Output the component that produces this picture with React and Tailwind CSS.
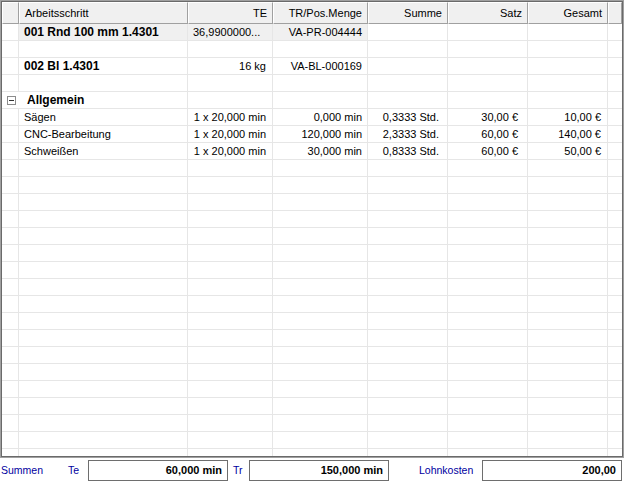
import React from 'react';

const cols = [
    { key: 'ind', w: 'w-[17px]' },
    { key: 'name', w: 'w-[169px]', label: 'Arbeitsschritt', align: 'text-left pl-[5px]' },
    { key: 'te', w: 'w-[85px]', label: 'TE', align: 'text-right pr-[5px]' },
    { key: 'tr', w: 'w-[95px]', label: 'TR/Pos.Menge', align: 'text-right pr-[5px]' },
    { key: 'summe', w: 'w-[80px]', label: 'Summe', align: 'text-right pr-[5px]' },
    { key: 'satz', w: 'w-[80px]', label: 'Satz', align: 'text-right pr-[5px]' },
    { key: 'gesamt', w: 'w-[80px]', label: 'Gesamt', align: 'text-right pr-[5px]' },
    { key: 'rest', w: 'flex-1' },
];

// rows of the Arbeitsplan grid
const rows = [
    { type: 'material', name: '001 Rnd 100 mm 1.4301', te: '36,9900000...', teLeft: true, tr: 'VA-PR-004444', shaded: true },
    { type: 'empty' },
    { type: 'material', name: '002 Bl 1.4301', te: '16 kg', tr: 'VA-BL-000169' },
    { type: 'empty' },
    { type: 'group', name: 'Allgemein' },
    { type: 'step', name: 'Sägen', te: '1 x 20,000 min', tr: '0,000 min', summe: '0,3333 Std.', satz: '30,00 €', gesamt: '10,00 €' },
    { type: 'step', name: 'CNC-Bearbeitung', te: '1 x 20,000 min', tr: '120,000 min', summe: '2,3333 Std.', satz: '60,00 €', gesamt: '140,00 €' },
    { type: 'step', name: 'Schweißen', te: '1 x 20,000 min', tr: '30,000 min', summe: '0,8333 Std.', satz: '60,00 €', gesamt: '50,00 €' },
];

const emptyRows = Array.from({ length: 19 }, (_, i) => i);

const Cell = ({ w, className = '', children }) => (
    <div className={`${w} shrink-0 h-full border-r border-[#e6e6e6] flex items-center overflow-hidden whitespace-nowrap ${className}`}>
        {children}
    </div>
);

const Row = ({ row }) => {
    const shade = row.shaded ? 'bg-[#f0f0f0]' : '';
    if (row.type === 'group') {
        return (
            <div className="flex h-[17px] border-b border-[#e6e6e6]">
                <div className="w-[17px] shrink-0 h-full flex items-center pl-[5px]">
                    <div className="w-[9px] h-[9px] border border-[#8c8c8c] bg-white flex items-center justify-center">
                        <div className="w-[5px] h-px bg-[#333]" />
                    </div>
                </div>
                <Cell w="w-[169px]" className="pl-[8px] font-bold text-[12px]">{row.name}</Cell>
                <Cell w="w-[85px]" />
                <Cell w="w-[95px]" />
                <Cell w="w-[80px]" />
                <Cell w="w-[80px]" />
                <Cell w="w-[80px]" />
                <div className="flex-1" />
            </div>
        );
    }
    const bold = row.type === 'material' ? 'font-bold text-[12px]' : '';
    return (
        <div className="flex h-[17px] border-b border-[#e6e6e6]">
            <Cell w="w-[17px]" />
            <Cell w="w-[169px]" className={`pl-[5px] ${bold} ${shade}`}>{row.name}</Cell>
            <Cell w="w-[85px]" className={`${row.teLeft ? 'justify-start pl-[5px]' : 'justify-end pr-[6px]'} ${shade}`}>{row.te}</Cell>
            <Cell w="w-[95px]" className={`justify-end pr-[5px] ${shade}`}>{row.tr}</Cell>
            <Cell w="w-[80px]" className="justify-end pr-[8px]">{row.summe}</Cell>
            <Cell w="w-[80px]" className="justify-end pr-[9px]">{row.satz}</Cell>
            <Cell w="w-[80px]" className="justify-end pr-[6px]">{row.gesamt}</Cell>
            <div className="flex-1" />
        </div>
    );
};

const SumBox = ({ w, children }) => (
    <div className={`${w} h-[21px] border border-[#6e6e6e] flex items-center justify-end pr-[5px] font-bold text-[11px] text-black`}>
        {children}
    </div>
);

const App = () => {
    return (
        <div className="w-[625px] h-[487px] bg-white text-[11px] text-black overflow-hidden" style={{ fontFamily: '"Liberation Sans", Arial, sans-serif' }}>
            {/* grid frame */}
            <div className="w-[624px] h-[458px] border border-[#a0a0a0]">
                <div className="w-full h-full border border-[#6a6a6a] flex flex-col overflow-hidden">
                    {/* header */}
                    <div className="flex h-[22px] shrink-0">
                        {cols.map((c) => (
                            <div
                                key={c.key}
                                className={`${c.w} shrink-0 h-full bg-[#f0f0f0] border-t border-l border-t-white border-l-white border-r border-b border-r-[#a0a0a0] border-b-[#a0a0a0] flex items-center`}
                            >
                                <span className={`w-full ${c.align || ''}`}>{c.label}</span>
                            </div>
                        ))}
                    </div>
                    {/* body */}
                    <div className="flex-1 overflow-hidden">
                        {rows.map((r, i) => (
                            <Row key={i} row={r} />
                        ))}
                        {emptyRows.map((i) => (
                            <Row key={'e' + i} row={{ type: 'empty' }} />
                        ))}
                    </div>
                </div>
            </div>
            {/* footer totals */}
            <div className="flex items-center h-[23px] mt-px text-[10.5px]">
                <span className="ml-[1px] w-[67px] text-[#0000a0]">Summen</span>
                <span className="w-[20px] text-[#0000a0]">Te</span>
                <SumBox w="w-[140px]">60,000 min</SumBox>
                <span className="ml-[5px] w-[16px] text-[#0000a0]">Tr</span>
                <SumBox w="w-[140px]">150,000 min</SumBox>
                <span className="ml-[30px] w-[63px] text-[#0000a0]">Lohnkosten</span>
                <SumBox w="w-[140px]">200,00</SumBox>
            </div>
        </div>
    );
};

export default App;
